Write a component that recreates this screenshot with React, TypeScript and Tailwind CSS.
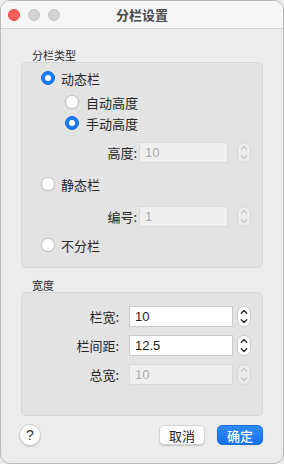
import React from "react";

const font = "font-['Noto_Sans_CJK_SC','Noto_Sans',sans-serif]";

function Radio({ checked }: { checked: boolean }) {
  return checked ? (
    <div className="w-[14px] h-[14px] rounded-full bg-[#1a7cf5] border border-[#1468d8] flex items-center justify-center shrink-0">
      <div className="w-[6px] h-[6px] rounded-full bg-white" />
    </div>
  ) : (
    <div className="w-[14px] h-[14px] rounded-full bg-white border border-[#c4c4c4] shadow-[0_0.5px_1px_rgba(0,0,0,0.12)] shrink-0" />
  );
}

function Stepper({ disabled }: { disabled?: boolean }) {
  const c = disabled ? "#c9c9c9" : "#2a2a2a";
  return (
    <svg width="14" height="21" viewBox="0 0 14 21" className="shrink-0">
      <rect x="0.5" y="0.5" width="13" height="20" rx="6.5" fill={disabled ? "#ececec" : "#ffffff"} stroke={disabled ? "#d6d6d6" : "#c8c8c8"} />
      <path d="M4.3 7.3 L7 4.6 L9.7 7.3" fill="none" stroke={c} strokeWidth="1.4" strokeLinecap="round" strokeLinejoin="round" />
      <path d="M4.3 13.7 L7 16.4 L9.7 13.7" fill="none" stroke={c} strokeWidth="1.4" strokeLinecap="round" strokeLinejoin="round" />
    </svg>
  );
}

function Field({ value, disabled, width }: { value: string; disabled?: boolean; width: string }) {
  return (
    <div
      className={`${width} h-[21px] flex items-center pl-[5px] text-[13px] border ${
        disabled ? "bg-[#efefef] border-[#dadada] text-[#acacac]" : "bg-white border-[#c9c9c9] text-[#1f1f1f]"
      } font-['Liberation_Sans',sans-serif]`}
    >
      {value}
    </div>
  );
}

export default function App() {
  return (
    <div className={`w-[284px] h-[464px] ${font} text-[#262626] bg-[#ececec]`}>
      <div className="w-[284px] h-[464px] rounded-[10px] border border-[#b9b9b9] overflow-hidden flex flex-col bg-[#ececec]">
        {/* title bar */}
        <div className="h-[28px] shrink-0 bg-[#f6f6f6] border-b border-[#d3d3d3] flex items-center relative">
          <div className="flex items-center gap-[8px] pl-[7px]">
            <div className="w-[12px] h-[12px] rounded-full bg-[#fe5f57] border border-[#e2463f]" />
            <div className="w-[12px] h-[12px] rounded-full bg-[#d3d3d3] border border-[#c2c2c2]" />
            <div className="w-[12px] h-[12px] rounded-full bg-[#d3d3d3] border border-[#c2c2c2]" />
          </div>
          <div className="absolute inset-0 flex items-center justify-center text-[13px] font-bold text-[#4b4b4b] leading-none">
            分栏设置
          </div>
        </div>

        {/* body */}
        <div className="flex-1 flex flex-col px-[20px]">
          <div className="mt-[19px] h-[14px] text-[11px] leading-[14px] pl-[11px] text-[#2a2a2a]">分栏类型</div>
          <div className="h-[206px] rounded-[5px] bg-[#e3e3e3] border border-[#d6d6d6] flex flex-col pl-[19px]">
            <div className="mt-[5px] h-[20px] flex items-center gap-[6px]">
              <Radio checked />
              <span className="text-[13px] leading-none">动态栏</span>
            </div>
            <div className="mt-[4px] h-[20px] flex items-center gap-[7px] ml-[24px]">
              <Radio checked={false} />
              <span className="text-[13px] leading-none">自动高度</span>
            </div>
            <div className="mt-[1px] h-[20px] flex items-center gap-[7px] ml-[24px]">
              <Radio checked />
              <span className="text-[13px] leading-none">手动高度</span>
            </div>
            <div className="mt-[9px] h-[21px] flex items-center">
              <div className="w-[98px] text-right text-[13px] leading-none pr-[2px]">高度:</div>
              <Field value="10" disabled width="w-[89px]" />
              <div className="ml-[9px]">
                <Stepper disabled />
              </div>
            </div>
            <div className="mt-[11px] h-[20px] flex items-center gap-[6px]">
              <Radio checked={false} />
              <span className="text-[13px] leading-none">静态栏</span>
            </div>
            <div className="mt-[12px] h-[21px] flex items-center">
              <div className="w-[98px] text-right text-[13px] leading-none pr-[2px]">编号:</div>
              <Field value="1" disabled width="w-[89px]" />
              <div className="ml-[9px]">
                <Stepper disabled />
              </div>
            </div>
            <div className="mt-[8px] h-[20px] flex items-center gap-[6px]">
              <Radio checked={false} />
              <span className="text-[13px] leading-none">不分栏</span>
            </div>
          </div>

          <div className="mt-[10px] h-[14px] text-[11px] leading-[14px] pl-[11px] text-[#2a2a2a]">宽度</div>
          <div className="h-[124px] rounded-[5px] bg-[#e3e3e3] border border-[#d6d6d6] flex flex-col pt-[13px] gap-[8px]">
            {[
              { l: "栏宽:", v: "10", d: false },
              { l: "栏间距:", v: "12.5", d: false },
              { l: "总宽:", v: "10", d: true },
            ].map((r) => (
              <div key={r.l} className="h-[21px] flex items-center">
                <div className={`w-[97px] text-right text-[13px] leading-none`}>{r.l}</div>
                <div className="ml-[10px]">
                  <Field value={r.v} disabled={r.d} width="w-[104px]" />
                </div>
                <div className="ml-[4px]">
                  <Stepper disabled={r.d} />
                </div>
              </div>
            ))}
          </div>

          {/* footer */}
          <div className="mt-[8px] h-[22px] flex items-center">
            <div className="ml-[-2px] w-[22px] h-[22px] rounded-full bg-white border border-[#cfcfcf] shadow-[0_1px_1px_rgba(0,0,0,0.15)] flex items-center justify-center text-[14px] font-['Liberation_Sans',sans-serif] text-[#333]">
              ?
            </div>
            <div className="flex-1" />
            <div className="w-[46px] h-[20px] rounded-[5px] bg-white border border-[#d2d2d2] shadow-[0_1px_1px_rgba(0,0,0,0.15)] flex items-center justify-center text-[13px] leading-none text-[#262626]">
              取消
            </div>
            <div className="ml-[12px] w-[46px] h-[20px] rounded-[5px] bg-[linear-gradient(#2f8bf8,#1672ef)] border border-[#1a6fe0] flex items-center justify-center text-[13px] leading-none text-white font-medium">
              确定
            </div>
          </div>
        </div>
      </div>
    </div>
  );
}
